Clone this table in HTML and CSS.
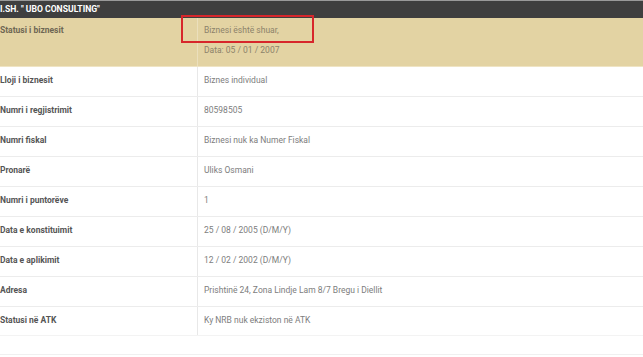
FILE: index.html
```html
<!DOCTYPE html>
<html lang="sq">
<head>
<meta charset="utf-8">
<title>UBO CONSULTING</title>
<link rel="stylesheet" href="styles.css">
</head>
<body>
<div class="page">
  <div class="title">I.SH. " UBO CONSULTING"</div>
  <div class="info">
    <div class="row status">
      <div class="label">Statusi i biznesit</div>
      <div class="value">
        <div>Biznesi është shuar,</div>
        <div class="second">Data: 05 / 01 / 2007</div>
      </div>
    </div>
    <div class="row"><div class="label">Lloji i biznesit</div><div class="value">Biznes individual</div></div>
    <div class="row"><div class="label">Numri i regjistrimit</div><div class="value">80598505</div></div>
    <div class="row"><div class="label">Numri fiskal</div><div class="value">Biznesi nuk ka Numer Fiskal</div></div>
    <div class="row"><div class="label">Pronarë</div><div class="value">Uliks Osmani</div></div>
    <div class="row"><div class="label">Numri i puntorëve</div><div class="value">1</div></div>
    <div class="row"><div class="label">Data e konstituimit</div><div class="value">25 / 08 / 2005 (D/M/Y)</div></div>
    <div class="row"><div class="label">Data e aplikimit</div><div class="value">12 / 02 / 2002 (D/M/Y)</div></div>
    <div class="row"><div class="label">Adresa</div><div class="value">Prishtinë 24, Zona Lindje Lam 8/7 Bregu i Diellit</div></div>
    <div class="row last"><div class="label">Statusi në ATK</div><div class="value">Ky NRB nuk ekziston në ATK</div></div>
  </div>
  <div class="separator"></div>
  <div class="highlight"></div>
</div>
</body>
</html>
```
FILE: styles.css
```css
html, body {
  margin: 0;
  padding: 0;
  background: #ffffff;
}
body {
  font-family: Roboto, "Liberation Sans", sans-serif;
  font-size: 8.5px;
  line-height: 11px;
}
.page {
  position: relative;
  width: 643px;
  height: 357px;
  overflow: hidden;
}
.title {
  box-sizing: border-box;
  height: 18px;
  border-top: 1px solid #9a9a9a;
  background: #3f3f3f;
  color: #ffffff;
  font-weight: 700;
  font-size: 8.6px;
  line-height: 16px;
}
.info {
  display: flex;
  flex-direction: column;
}
.row {
  display: grid;
  grid-template-columns: 198px 1fr;
  height: 30px;
  box-sizing: border-box;
  border-bottom: 1px solid #ececec;
}
.row.status {
  height: 49px;
  background: #e3d3a3;
  border-bottom: 1px solid #efe4c4;
}
.label {
  font-weight: 700;
  color: #555555;
  padding-top: 8px;
  border-right: 1px solid #e8e8e8;
}
.row.status .label {
  color: #6e6653;
  border-right-color: #ebdfbc;
  padding-top: 7px;
}
.value {
  color: #7d7d7d;
  padding-top: 8px;
  padding-left: 6px;
}
.row.status .value {
  color: #8c826a;
  padding-top: 7px;
}
.second {
  margin-top: 9px;
}
.row.last {
  height: 29px;
  border-bottom: 1px solid #f3f3f3;
}
.separator {
  margin-top: 18px;
  border-top: 1px solid #f0f0f0;
}
.highlight {
  position: absolute;
  left: 181px;
  top: 15px;
  width: 133px;
  height: 28px;
  box-sizing: border-box;
  border: 2px solid #d7262b;
}
```
